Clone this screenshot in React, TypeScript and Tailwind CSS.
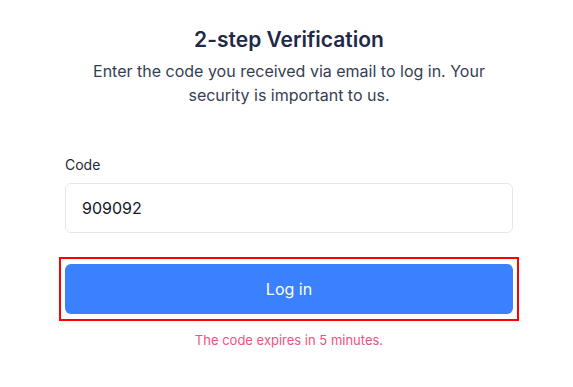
export default function App() {
  return (
    <div className="min-h-screen bg-white font-['Inter','Liberation_Sans',sans-serif]">
      <div className="pl-[65px] pr-[60px] pt-[26px]">
        {/* Header */}
        <div className="text-center">
          <h1 className="text-[21px] leading-7 font-semibold text-[#1e2a47]">2-step Verification</h1>
          <p className="mt-[5px] text-base leading-6 text-[#353e52]">
            Enter the code you received via email to log in. Your security is important to us.
          </p>
        </div>

        {/* Form */}
        <form className="mt-[48px]" onSubmit={(e) => e.preventDefault()}>
          <label htmlFor="code" className="block text-sm leading-5 text-[#1f2937]">
            Code
          </label>
          <input
            id="code"
            defaultValue="909092"
            className="mt-2 block h-[50px] w-full rounded-md border border-[#e5e7eb] px-4 text-base text-[#111827] outline-none"
          />
          <div className="mt-[30px] py-px outline-2 outline-offset-4 outline-[#ff0000]">
            <button
              type="submit"
              className="block h-[50px] w-full rounded-md bg-[#3a80ff] text-base text-white"
            >
              Log in
            </button>
          </div>
          <p className="mt-[17px] text-center text-[13px] leading-4 text-[#f0527e]">
            The code expires in 5 minutes.
          </p>
        </form>
      </div>
    </div>
  );
}
